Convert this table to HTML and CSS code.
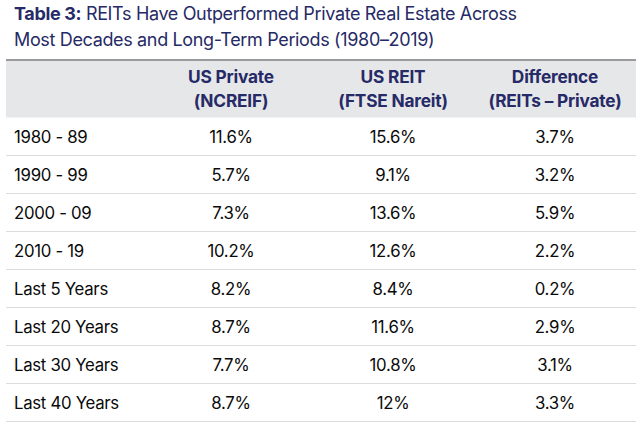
FILE: index.html
```html
<!DOCTYPE html>
<html>
<head>
<meta charset="utf-8">
<link rel="stylesheet" href="styles.css">
</head>
<body>
<div class="page">
  <h1 class="title"><b>Table 3:</b> REITs Have Outperformed Private Real Estate Across<br>Most Decades and Long-Term Periods (1980–2019)</h1>
  <div class="table">
    <div class="row head">
      <div class="cell label"></div>
      <div class="cell">US Private<br>(NCREIF)</div>
      <div class="cell">US REIT<br>(FTSE Nareit)</div>
      <div class="cell">Difference<br>(REITs – Private)</div>
    </div>
    <div class="row"><div class="cell label">1980 - 89</div><div class="cell">11.6%</div><div class="cell">15.6%</div><div class="cell">3.7%</div></div>
    <div class="row"><div class="cell label">1990 - 99</div><div class="cell">5.7%</div><div class="cell">9.1%</div><div class="cell">3.2%</div></div>
    <div class="row"><div class="cell label">2000 - 09</div><div class="cell">7.3%</div><div class="cell">13.6%</div><div class="cell">5.9%</div></div>
    <div class="row"><div class="cell label">2010 - 19</div><div class="cell">10.2%</div><div class="cell">12.6%</div><div class="cell">2.2%</div></div>
    <div class="row"><div class="cell label">Last 5 Years</div><div class="cell">8.2%</div><div class="cell">8.4%</div><div class="cell">0.2%</div></div>
    <div class="row"><div class="cell label">Last 20 Years</div><div class="cell">8.7%</div><div class="cell">11.6%</div><div class="cell">2.9%</div></div>
    <div class="row"><div class="cell label">Last 30 Years</div><div class="cell">7.7%</div><div class="cell">10.8%</div><div class="cell">3.1%</div></div>
    <div class="row"><div class="cell label">Last 40 Years</div><div class="cell">8.7%</div><div class="cell">12%</div><div class="cell">3.3%</div></div>
  </div>
</div>
</body>
</html>
```
FILE: styles.css
```css
html, body { margin: 0; padding: 0; background: #ffffff; }
body { font-family: Inter, "Noto Sans", sans-serif; }
.page { padding: 0 4px 0 6px; }
.title {
  margin: 0;
  padding: 1px 0 0 8px;
  font-size: 18px;
  line-height: 26px;
  font-weight: 400;
  color: #262a66;
  height: 59px;
  box-sizing: border-box;
  letter-spacing: -0.35px;
}
.title b { font-weight: 700; }
.table { width: 630px; border-top: 2px solid #9a9a9c; }
.row {
  display: grid;
  grid-template-columns: 144px 1fr 1fr 1fr;
  height: 38px;
  align-items: center;
  border-bottom: 1.5px solid #dcdcde;
  box-sizing: border-box;
  font-size: 16.8px;
  color: #0a0a0a;
  letter-spacing: -0.3px;
  padding-top: 1px;
}
.row.head {
  height: 57px;
  background: #e6e7e9;
  color: #262a66;
  font-weight: 700;
  font-size: 17.3px;
  line-height: 24px;
  letter-spacing: -0.2px;
  border-bottom-color: #f2f2f3;
  padding-top: 0;
}
.cell { text-align: center; }
.cell.label { text-align: left; padding-left: 8px; }
```
